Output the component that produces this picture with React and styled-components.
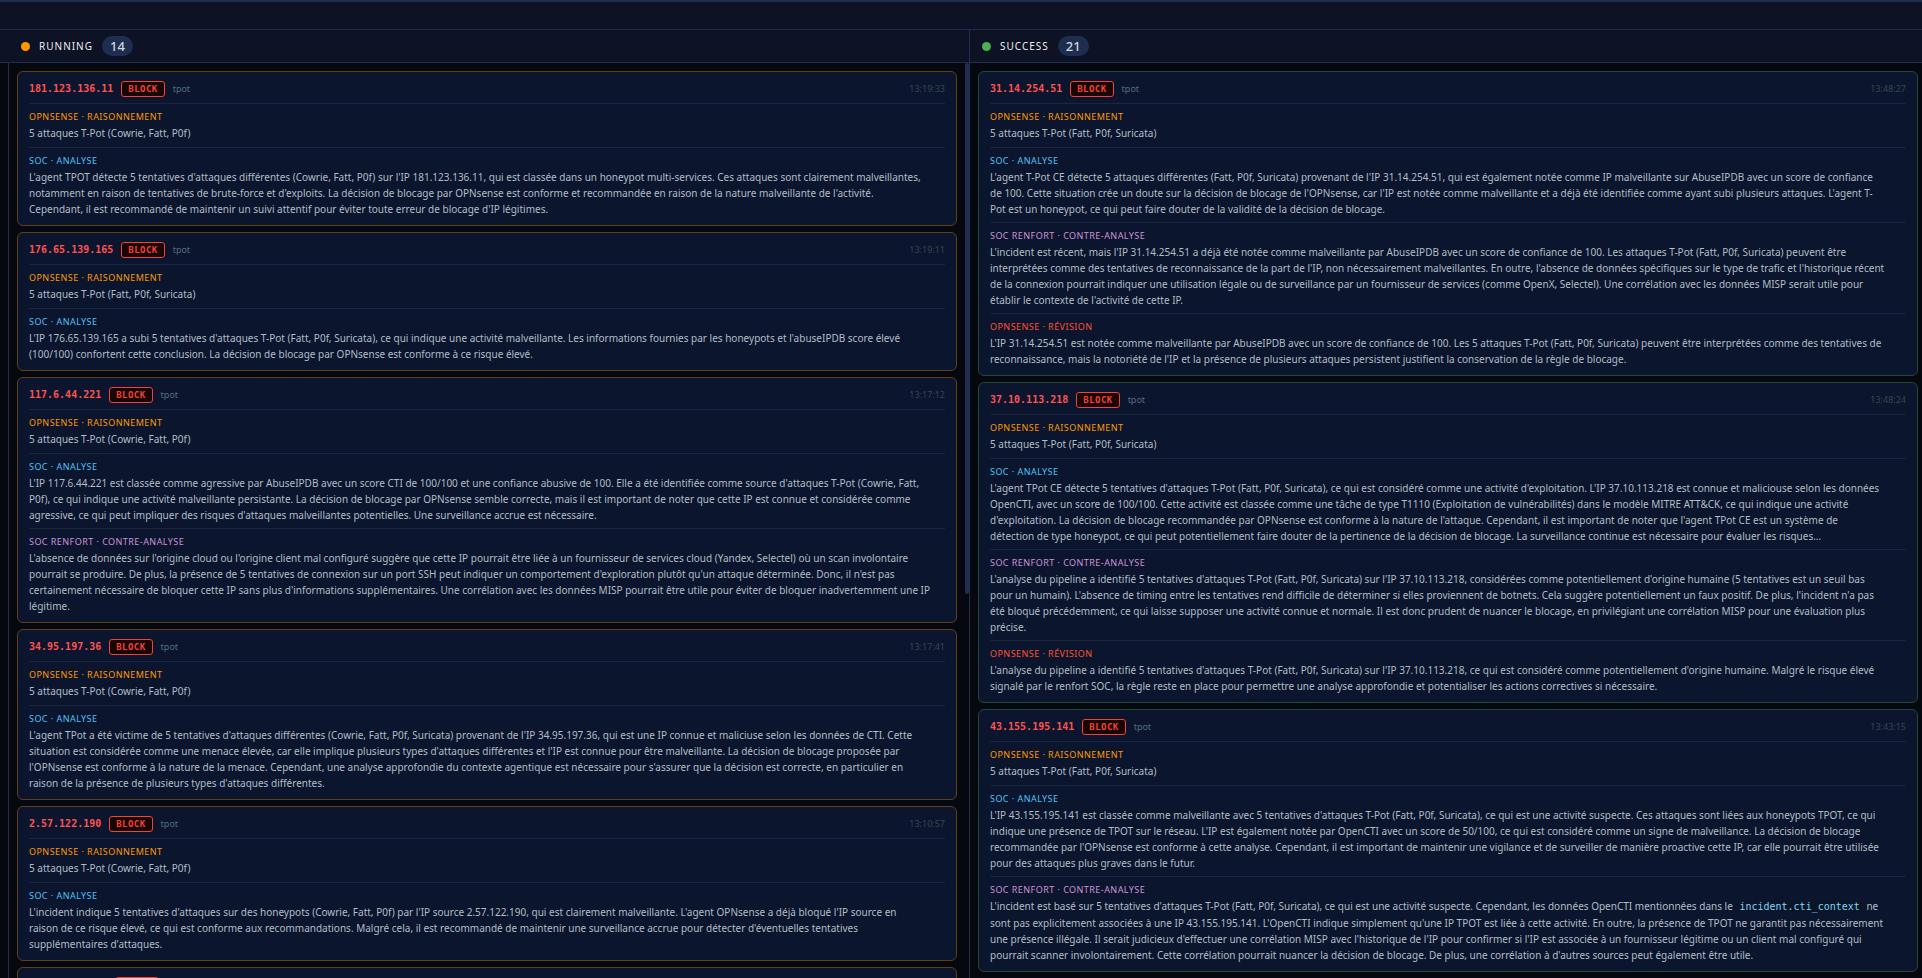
import styled, { createGlobalStyle } from 'styled-components'

const GlobalStyle = createGlobalStyle`
    * {
        box-sizing: border-box;
    }

    body {
        margin: 0;
        background: #05080f;
        color: #b0bec5;
        font-family: 'Noto Sans', 'Open Sans', sans-serif;
        font-size: 10px;
        line-height: 16px;
        overflow: hidden;
    }

    h2, h3, p {
        margin: 0;
        font-weight: 400;
    }
`

const Page = styled.div`
    display: flex;
    flex-direction: column;
    height: 100vh;
`

const TopBar = styled.header`
    flex: 0 0 30px;
    background: #0d1224;
    border-top: 2px solid #1e2d50;
    border-bottom: 1px solid #1e2d50;
`

const Board = styled.main`
    flex: 1 1 auto;
    min-height: 0;
    display: grid;
    grid-template-columns: 9px 50% 50%;
    grid-template-rows: 100%;
    overflow: hidden;
`

const Column = styled.section`
    display: flex;
    flex-direction: column;
    min-width: 0;
    min-height: 0;
    border-right: 1px solid #1e2d50;
`

const ColumnHeader = styled.div`
    flex: 0 0 33px;
    display: flex;
    align-items: center;
    padding: 0 12px;
    background: #0d1224;
    border-bottom: 1px solid #1e2d50;

    h2 {
        margin: 0 9px;
        color: #eceff1;
        font-size: 10px;
        letter-spacing: 1px;
        text-transform: uppercase;
    }
`

const Dot = styled.span`
    width: 9px;
    height: 9px;
    border-radius: 50%;
    background: ${({ $color }) => $color};
`

const Count = styled.span`
    padding: 0 8px;
    border-radius: 10px;
    background: #1e2d50;
    color: #cfd8dc;
    font-size: 13px;
    font-weight: 500;
    line-height: 20px;
`

const ColumnBody = styled.div`
    flex: 1 1 auto;
    min-height: 0;
    display: flex;
`

const CardList = styled.div`
    flex: 1 1 auto;
    min-width: 0;
    overflow: hidden;
    display: flex;
    flex-direction: column;
    gap: 6px;
    padding: 8px;
`

const ScrollTrack = styled.div`
    flex: 0 0 4px;
`

const ScrollThumb = styled.div`
    height: 58%;
    border-radius: 2px;
    background: #1e2d50;
`

const Card = styled.article`
    flex: 0 0 auto;
    padding: 9px 11px 3px;
    border: 1px solid ${({ $border }) => $border};
    border-radius: 6px;
    background: #0b152d;
`

const CardHeader = styled.div`
    display: flex;
    align-items: center;
    gap: 8px;
    padding-bottom: 6px;

    time {
        margin-left: auto;
        color: #37474f;
        font-size: 9px;
    }
`

const Ip = styled.span`
    color: #ff5252;
    font-family: 'DejaVu Sans Mono', monospace;
    font-size: 10px;
    font-weight: 700;
`

const Badge = styled.span`
    padding: 0 6px;
    border: 1px solid #f44336;
    border-radius: 3px;
    background: #1a0505;
    color: #f44336;
    font-family: 'DejaVu Sans Mono', monospace;
    font-size: 9px;
    font-weight: 700;
    letter-spacing: 0.05em;
    line-height: 14px;
`

const Source = styled.span`
    color: #546e7a;
    font-size: 9px;
`

const Step = styled.section`
    min-height: 44px;
    padding: 5px 0;
    border-top: 1px solid #1a2540;

    h3 {
        color: ${({ $color }) => $color};
        font-size: 9px;
        letter-spacing: 0.05em;
        text-transform: uppercase;
    }

    p {
        white-space: pre-line;
    }
`

const Code = styled.code`
    padding: 0 4px;
    border-radius: 2px;
    background: #0a1628;
    color: #81d4fa;
    font-family: 'DejaVu Sans Mono', monospace;
    font-size: 10px;
`

const steps = {
    reason: { title: 'OPNsense · Raisonnement', color: '#ff9800' },
    analysis: { title: 'SOC · Analyse', color: '#4fc3f7' },
    counter: { title: 'SOC Renfort · Contre-analyse', color: '#ce93d8' },
    review: { title: 'OPNsense · Révision', color: '#ff5232' }
}

// agent answers keep their own line breaks
const running = [
    {
        ip: '181.123.136.11',
        time: '13:19:33',
        reason: '5 attaques T-Pot (Cowrie, Fatt, P0f)',
        analysis: `L'agent TPOT détecte 5 tentatives d'attaques différentes (Cowrie, Fatt, P0f) sur l'IP 181.123.136.11, qui est classée dans un honeypot multi-services. Ces attaques sont clairement malveillantes,
notamment en raison de tentatives de brute-force et d'exploits. La décision de blocage par OPNsense est conforme et recommandée en raison de la nature malveillante de l'activité.
Cependant, il est recommandé de maintenir un suivi attentif pour éviter toute erreur de blocage d'IP légitimes.`
    },
    {
        ip: '176.65.139.165',
        time: '13:19:11',
        reason: '5 attaques T-Pot (Fatt, P0f, Suricata)',
        analysis: `L'IP 176.65.139.165 a subi 5 tentatives d'attaques T-Pot (Fatt, P0f, Suricata), ce qui indique une activité malveillante. Les informations fournies par les honeypots et l'abuseIPDB score élevé
(100/100) confortent cette conclusion. La décision de blocage par OPNsense est conforme à ce risque élevé.`
    },
    {
        ip: '117.6.44.221',
        time: '13:17:12',
        reason: '5 attaques T-Pot (Cowrie, Fatt, P0f)',
        analysis: `L'IP 117.6.44.221 est classée comme agressive par AbuseIPDB avec un score CTI de 100/100 et une confiance abusive de 100. Elle a été identifiée comme source d'attaques T-Pot (Cowrie, Fatt,
P0f), ce qui indique une activité malveillante persistante. La décision de blocage par OPNsense semble correcte, mais il est important de noter que cette IP est connue et considérée comme
agressive, ce qui peut impliquer des risques d'attaques malveillantes potentielles. Une surveillance accrue est nécessaire.`,
        counter: `L'absence de données sur l'origine cloud ou l'origine client mal configuré suggère que cette IP pourrait être liée à un fournisseur de services cloud (Yandex, Selectel) où un scan involontaire
pourrait se produire. De plus, la présence de 5 tentatives de connexion sur un port SSH peut indiquer un comportement d'exploration plutôt qu'un attaque déterminée. Donc, il n'est pas
certainement nécessaire de bloquer cette IP sans plus d'informations supplémentaires. Une corrélation avec les données MISP pourrait être utile pour éviter de bloquer inadvertemment une IP
légitime.`
    },
    {
        ip: '34.95.197.36',
        time: '13:17:41',
        reason: '5 attaques T-Pot (Cowrie, Fatt, P0f)',
        analysis: `L'agent TPot a été victime de 5 tentatives d'attaques différentes (Cowrie, Fatt, P0f, Suricata) provenant de l'IP 34.95.197.36, qui est une IP connue et maliciuse selon les données de CTI. Cette
situation est considérée comme une menace élevée, car elle implique plusieurs types d'attaques différentes et l'IP est connue pour être malveillante. La décision de blocage proposée par
l'OPNsense est conforme à la nature de la menace. Cependant, une analyse approfondie du contexte agentique est nécessaire pour s'assurer que la décision est correcte, en particulier en
raison de la présence de plusieurs types d'attaques différentes.`
    },
    {
        ip: '2.57.122.190',
        time: '13:10:57',
        reason: '5 attaques T-Pot (Cowrie, Fatt, P0f)',
        analysis: `L'incident indique 5 tentatives d'attaques sur des honeypots (Cowrie, Fatt, P0f) par l'IP source 2.57.122.190, qui est clairement malveillante. L'agent OPNsense a déjà bloqué l'IP source en
raison de ce risque élevé, ce qui est conforme aux recommandations. Malgré cela, il est recommandé de maintenir une surveillance accrue pour détecter d'éventuelles tentatives
supplémentaires d'attaques.`
    },
    {
        ip: '45.148.10.121',
        time: '13:10:21',
        reason: '5 attaques T-Pot (Cowrie, Fatt, P0f)'
    }
]

const success = [
    {
        ip: '31.14.254.51',
        time: '13:48:27',
        reason: '5 attaques T-Pot (Fatt, P0f, Suricata)',
        analysis: `L'agent T-Pot CE détecte 5 attaques différentes (Fatt, P0f, Suricata) provenant de l'IP 31.14.254.51, qui est également notée comme IP malveillante sur AbuseIPDB avec un score de confiance
de 100. Cette situation crée un doute sur la décision de blocage de l'OPNsense, car l'IP est notée comme malveillante et a déjà été identifiée comme ayant subi plusieurs attaques. L'agent T-
Pot est un honeypot, ce qui peut faire douter de la validité de la décision de blocage.`,
        counter: `L'incident est récent, mais l'IP 31.14.254.51 a déjà été notée comme malveillante par AbuseIPDB avec un score de confiance de 100. Les attaques T-Pot (Fatt, P0f, Suricata) peuvent être
interprétées comme des tentatives de reconnaissance de la part de l'IP, non nécessairement malveillantes. En outre, l'absence de données spécifiques sur le type de trafic et l'historique récent
de la connexion pourrait indiquer une utilisation légale ou de surveillance par un fournisseur de services (comme OpenX, Selectel). Une corrélation avec les données MISP serait utile pour
établir le contexte de l'activité de cette IP.`,
        review: `L'IP 31.14.254.51 est notée comme malveillante par AbuseIPDB avec un score de confiance de 100. Les 5 attaques T-Pot (Fatt, P0f, Suricata) peuvent être interprétées comme des tentatives de
reconnaissance, mais la notoriété de l'IP et la présence de plusieurs attaques persistent justifient la conservation de la règle de blocage.`
    },
    {
        ip: '37.10.113.218',
        time: '13:48:24',
        reason: '5 attaques T-Pot (Fatt, P0f, Suricata)',
        analysis: `L'agent TPot CE détecte 5 tentatives d'attaques T-Pot (Fatt, P0f, Suricata), ce qui est considéré comme une activité d'exploitation. L'IP 37.10.113.218 est connue et maliciouse selon les données
OpenCTI, avec un score de 100/100. Cette activité est classée comme une tâche de type T1110 (Exploitation de vulnérabilités) dans le modèle MITRE ATT&CK, ce qui indique une activité
d'exploitation. La décision de blocage recommandée par OPNsense est conforme à la nature de l'attaque. Cependant, il est important de noter que l'agent TPot CE est un système de
détection de type honeypot, ce qui peut potentiellement faire douter de la pertinence de la décision de blocage. La surveillance continue est nécessaire pour évaluer les risques...`,
        counter: `L'analyse du pipeline a identifié 5 tentatives d'attaques T-Pot (Fatt, P0f, Suricata) sur l'IP 37.10.113.218, considérées comme potentiellement d'origine humaine (5 tentatives est un seuil bas
pour un humain). L'absence de timing entre les tentatives rend difficile de déterminer si elles proviennent de botnets. Cela suggère potentiellement un faux positif. De plus, l'incident n'a pas
été bloqué précédemment, ce qui laisse supposer une activité connue et normale. Il est donc prudent de nuancer le blocage, en privilégiant une corrélation MISP pour une évaluation plus
précise.`,
        review: `L'analyse du pipeline a identifié 5 tentatives d'attaques T-Pot (Fatt, P0f, Suricata) sur l'IP 37.10.113.218, ce qui est considéré comme potentiellement d'origine humaine. Malgré le risque élevé
signalé par le renfort SOC, la règle reste en place pour permettre une analyse approfondie et potentialiser les actions correctives si nécessaire.`
    },
    {
        ip: '43.155.195.141',
        time: '13:43:15',
        reason: '5 attaques T-Pot (Fatt, P0f, Suricata)',
        analysis: `L'IP 43.155.195.141 est classée comme malveillante avec 5 tentatives d'attaques T-Pot (Fatt, P0f, Suricata), ce qui est une activité suspecte. Ces attaques sont liées aux honeypots TPOT, ce qui
indique une présence de TPOT sur le réseau. L'IP est également notée par OpenCTI avec un score de 50/100, ce qui est considéré comme un signe de malveillance. La décision de blocage
recommandée par l'OPNsense est conforme à cette analyse. Cependant, il est important de maintenir une vigilance et de surveiller de manière proactive cette IP, car elle pourrait être utilisée
pour des attaques plus graves dans le futur.`,
        counter: `L'incident est basé sur 5 tentatives d'attaques T-Pot (Fatt, P0f, Suricata), ce qui est une activité suspecte. Cependant, les données OpenCTI mentionnées dans le \`incident.cti_context\` ne
sont pas explicitement associées à une IP 43.155.195.141. L'OpenCTI indique simplement qu'une IP TPOT est liée à cette activité. En outre, la présence de TPOT ne garantit pas nécessairement
une présence illégale. Il serait judicieux d'effectuer une corrélation MISP avec l'historique de l'IP pour confirmer si l'IP est associée à un fournisseur légitime ou un client mal configuré qui
pourrait scanner involontairement. Cette corrélation pourrait nuancer la décision de blocage. De plus, une corrélation à d'autres sources peut également être utile.`
    }
]

// `xxx` in an answer is shown as code
const renderText = text => text.split('`').map((part, i) => (
    i % 2 ? <Code key={i}>{part}</Code> : part
))

const IncidentCard = ({ incident, border }) => (
    <Card $border={border}>
        <CardHeader>
            <Ip>{incident.ip}</Ip>
            <Badge>BLOCK</Badge>
            <Source>tpot</Source>
            <time>{incident.time}</time>
        </CardHeader>
        {Object.keys(steps).filter(key => incident[key]).map(key => (
            <Step key={key} $color={steps[key].color}>
                <h3>{steps[key].title}</h3>
                <p>{renderText(incident[key])}</p>
            </Step>
        ))}
    </Card>
)

const StatusColumn = ({ title, count, color, border, incidents }) => (
    <Column>
        <ColumnHeader>
            <Dot $color={color}/>
            <h2>{title}</h2>
            <Count>{count}</Count>
        </ColumnHeader>
        <ColumnBody>
            <CardList>
                {incidents.map(incident => (
                    <IncidentCard key={incident.ip} incident={incident} border={border}/>
                ))}
            </CardList>
            <ScrollTrack aria-hidden="true">
                <ScrollThumb/>
            </ScrollTrack>
        </ColumnBody>
    </Column>
)

const App = () => (
    <>
        <GlobalStyle/>
        <Page>
            <TopBar/>
            <Board>
                <Column>
                    <ColumnHeader/>
                </Column>
                <StatusColumn title="Running" count={14} color="#ff9800" border="#5f4018" incidents={running}/>
                <StatusColumn title="Success" count={21} color="#4caf50" border="#22483a" incidents={success}/>
            </Board>
        </Page>
    </>
)

export default App
